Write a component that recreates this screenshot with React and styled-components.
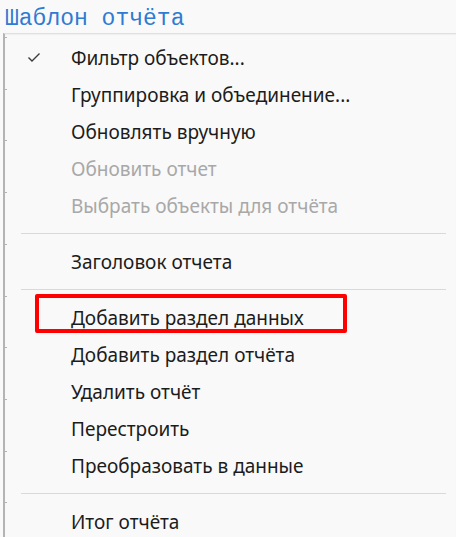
import React from 'react';
import { styled, createGlobalStyle } from 'styled-components';

const Global = createGlobalStyle`
  html, body {
    margin: 0;
    padding: 0;
    background: #f9f9f9;
  }
`;

const Page = styled.div`
  width: 456px;
  height: 537px;
  overflow: hidden;
  background: #f9f9f9;
`;

const Title = styled.div`
  font-family: "Liberation Mono", "Courier New", monospace;
  font-size: 23px;
  line-height: 26px;
  color: #2f7bd3;
  padding: 6px 0 0 5px;
  height: 27px;
`;

// the left border carries little tick marks, like a ruler behind the menu
const Menu = styled.div`
  margin-left: 3px;
  border-left: 2px solid #b4b4b4;
  border-top: 1px solid #e0e0e0;
  box-shadow: inset 0 1px 1px rgba(0, 0, 0, 0.04);
  padding-top: 5px;
  background-image: repeating-linear-gradient(
    to bottom,
    transparent 0 3px,
    #b4b4b4 3px 4px,
    transparent 4px 51.7px
  );
  background-size: 2px 100%;
  background-repeat: no-repeat;
  font-family: "Noto Sans", "Open Sans", sans-serif;
  font-size: 19px;
`;

const Row = styled.div`
  position: relative;
  display: grid;
  grid-template-columns: 66px 1fr;
  align-items: center;
  height: 37px;
  white-space: nowrap;
  color: ${p => (p.$disabled ? '#a8a8a8' : '#1c1c1c')};
`;

const Check = styled.span`
  display: flex;
  justify-content: center;
  padding-right: 8px;
`;

const Highlight = styled.div`
  position: absolute;
  left: 30px;
  top: -5px;
  width: 304px;
  height: 31px;
  border: 4px solid #ff0000;
  border-radius: 2px;
  pointer-events: none;
`;

const Separator = styled.div`
  height: 19px;
  display: flex;
  align-items: center;
  padding: 0 10px 0 16px;

  &::after {
    content: '';
    flex: 1;
    height: 1px;
    background: #d9d9d9;
  }
`;

const items = [
  { label: 'Фильтр объектов...', checked: true },
  { label: 'Группировка и объединение...' },
  { label: 'Обновлять вручную' },
  { label: 'Обновить отчет', disabled: true },
  { label: 'Выбрать объекты для отчёта', disabled: true },
  { sep: true },
  { label: 'Заголовок отчета' },
  { sep: true },
  { label: 'Добавить раздел данных', marked: true },
  { label: 'Добавить раздел отчёта' },
  { label: 'Удалить отчёт' },
  { label: 'Перестроить' },
  { label: 'Преобразовать в данные' },
  { sep: true },
  { label: 'Итог отчёта' },
];

const CheckMark = () => (
  <svg width="14" height="11" viewBox="0 0 14 11">
    <polyline points="1.5,5.5 5,9 12.5,1.5" fill="none" stroke="#3a3a3a" strokeWidth="1.4" />
  </svg>
);

const App = () => {
  return (
    <Page>
      <Global />
      <Title>Шаблон отчёта</Title>
      <Menu>
        {items.map((it, i) =>
          it.sep ? (
            <Separator key={i} />
          ) : (
            <Row key={i} $disabled={it.disabled}>
              <Check>{it.checked && <CheckMark />}</Check>
              <span>{it.label}</span>
              {it.marked && <Highlight />}
            </Row>
          )
        )}
      </Menu>
    </Page>
  );
};

export default App;
